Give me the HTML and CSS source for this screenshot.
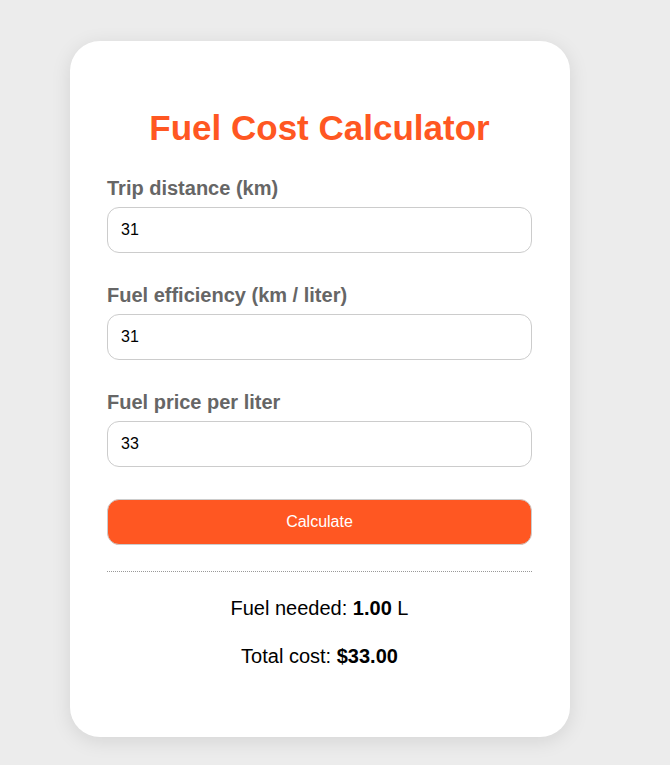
FILE: index.html
```html
<!DOCTYPE html>
<html lang="en">
<head>
<meta charset="utf-8">
<title>Fuel Cost Calculator</title>
<link rel="stylesheet" href="styles.css">
</head>
<body>
<main class="card">
  <h1 class="title">Fuel Cost Calculator</h1>
  <form class="form">
    <div class="field">
      <label class="label" for="distance">Trip distance (km)</label>
      <input class="input" id="distance" type="text" value="31">
    </div>
    <div class="field">
      <label class="label" for="efficiency">Fuel efficiency (km / liter)</label>
      <input class="input" id="efficiency" type="text" value="31">
    </div>
    <div class="field">
      <label class="label" for="price">Fuel price per liter</label>
      <input class="input" id="price" type="text" value="33">
    </div>
    <button class="button" type="button">Calculate</button>
  </form>
  <hr class="divider">
  <div class="results">
    <p class="result">Fuel needed: <strong>1.00</strong> L</p>
    <p class="result">Total cost: <strong>$33.00</strong></p>
  </div>
</main>
</body>
</html>
```
FILE: styles.css
```css
html, body {
  margin: 0;
  padding: 0;
}
body {
  background: #ececec;
  font-family: "Liberation Sans", Arial, sans-serif;
  min-height: 765px;
  padding-top: 41px;
  box-sizing: border-box;
}
.card {
  width: 500px;
  box-sizing: border-box;
  margin-left: 70px;
  background: #fff;
  border-radius: 30px;
  box-shadow: 0 4px 20px rgba(0, 0, 0, 0.1);
  padding: 67px 38px 69px 37px;
}
.title {
  margin: 0 0 29px;
  font-size: 35px;
  line-height: 40px;
  font-weight: bold;
  color: #ff5722;
  text-align: center;
}
.form {
  display: flex;
  flex-direction: column;
  gap: 31px;
}
.field {
  display: flex;
  flex-direction: column;
  gap: 7px;
}
.label {
  font-size: 20px;
  line-height: 23px;
  font-weight: bold;
  color: #666;
}
.input {
  height: 46px;
  box-sizing: border-box;
  border: 1px solid #ccc;
  border-radius: 12px;
  padding: 0 13px;
  font-family: "Liberation Sans", Arial, sans-serif;
  font-size: 16px;
  color: #000;
  background: #fff;
  outline: none;
}
.button {
  margin-top: 1px;
  height: 46px;
  box-sizing: border-box;
  border: 1px solid #ccc;
  border-radius: 12px;
  background: #ff5722;
  color: #fff;
  font-family: "Liberation Sans", Arial, sans-serif;
  font-size: 16px;
  cursor: pointer;
}
.divider {
  margin: 26px 0 0;
  border: 0;
  border-top: 1px dotted #999;
  height: 0;
}
.results {
  display: flex;
  flex-direction: column;
  gap: 25px;
  padding-top: 25px;
}
.result {
  margin: 0;
  font-size: 20px;
  line-height: 23px;
  text-align: center;
  color: #000;
}
```
